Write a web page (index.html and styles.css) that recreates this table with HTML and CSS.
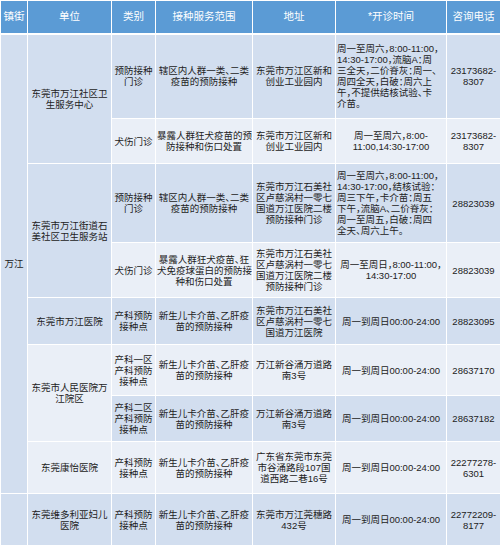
FILE: index.html
```html
<!DOCTYPE html>
<html lang="zh-CN">
<head>
<meta charset="utf-8">
<title>万江预防接种门诊</title>
<link rel="stylesheet" href="styles.css">
</head>
<body>
<table class="sched">
  <colgroup>
    <col class="c-town">
    <col class="c-unit">
    <col class="c-type">
    <col class="c-scope">
    <col class="c-addr">
    <col class="c-time">
    <col class="c-tel">
  </colgroup>
  <thead>
    <tr class="head">
      <th>镇街</th>
      <th>单位</th>
      <th>类别</th>
      <th>接种服务范围</th>
      <th>地址</th>
      <th>*开诊时间</th>
      <th>咨询电话</th>
    </tr>
  </thead>
  <tbody>
    <tr class="dark h85">
      <td rowspan="8">万江</td>
      <td rowspan="2">东莞市万江社区卫<br>生服务中心</td>
      <td>预防接种<br>门诊</td>
      <td>辖区内人群一类、二类<br>疫苗的预防接种</td>
      <td>东莞市万江区新和<br>创业工业园内</td>
      <td class="left">周一至周六，8:00-11:00，<br>14:30-17:00，流脑A：周<br>三全天，二价脊灰：周一、<br>周四全天，白破：周六上<br>午，不提供结核试验、卡<br>介苗。</td>
      <td>23173682-<br>8307</td>
    </tr>
    <tr class="light h45">
      <td>犬伤门诊</td>
      <td>暴露人群狂犬疫苗的预<br>防接种和伤口处置</td>
      <td>东莞市万江区新和<br>创业工业园内</td>
      <td>周一至周六，8:00-<br>11:00,14:30-17:00</td>
      <td>23173682-<br>8307</td>
    </tr>
    <tr class="dark h79">
      <td rowspan="2">东莞市万江街道石<br>美社区卫生服务站</td>
      <td>预防接种<br>门诊</td>
      <td>辖区内人群一类、二类<br>疫苗的预防接种</td>
      <td>东莞市万江石美社<br>区卢慈涡村一零七<br>国道万江医院二楼<br>预防接种门诊</td>
      <td class="left">周一至周六，8:00-11:00，<br>14:30-17:00，结核试验：<br>周三下午，卡介苗：周五<br>下午，流脑A、二价脊灰：<br>周一至周五，白破：周四<br>全天、周六上午。</td>
      <td>28823039</td>
    </tr>
    <tr class="light h55">
      <td>犬伤门诊</td>
      <td>暴露人群狂犬疫苗、狂<br>犬免疫球蛋白的预防接<br>种和伤口处置</td>
      <td>东莞市万江石美社<br>区卢慈涡村一零七<br>国道万江医院二楼<br>预防接种门诊</td>
      <td>周一至周日，8:00-11:00，<br>14:30-17:00</td>
      <td>28823039</td>
    </tr>
    <tr class="dark h47">
      <td>东莞市万江医院</td>
      <td>产科预防<br>接种点</td>
      <td>新生儿卡介苗、乙肝疫<br>苗的预防接种</td>
      <td>东莞市万江石美社<br>区卢慈涡村一零七<br>国道万江医院</td>
      <td>周一到周日00:00-24:00</td>
      <td>28823095</td>
    </tr>
    <tr class="light h51">
      <td rowspan="2">东莞市人民医院万<br>江院区</td>
      <td>产科一区<br>产科预防<br>接种点</td>
      <td>新生儿卡介苗、乙肝疫<br>苗的预防接种</td>
      <td>万江新谷涌万道路<br>南3号</td>
      <td>周一到周日00:00-24:00</td>
      <td>28637170</td>
    </tr>
    <tr class="dark h46">
      <td>产科二区<br>产科预防<br>接种点</td>
      <td>新生儿卡介苗、乙肝疫<br>苗的预防接种</td>
      <td>万江新谷涌万道路<br>南3号</td>
      <td>周一到周日00:00-24:00</td>
      <td>28637182</td>
    </tr>
    <tr class="light h52">
      <td>东莞康怡医院</td>
      <td>产科预防<br>接种点</td>
      <td>新生儿卡介苗、乙肝疫<br>苗的预防接种</td>
      <td>广东省东莞市东莞<br>市谷涌路段107国<br>道西路二巷16号</td>
      <td>周一到周日00:00-24:00</td>
      <td>22277278-<br>6301</td>
    </tr>
    <tr class="dark h52">
      <td></td>
      <td>东莞维多利亚妇儿<br>医院</td>
      <td>产科预防<br>接种点</td>
      <td>新生儿卡介苗、乙肝疫<br>苗的预防接种</td>
      <td>东莞市万江莞穗路<br>432号</td>
      <td>周一到周日00:00-24:00</td>
      <td>22772209-<br>8177</td>
    </tr>
  </tbody>
</table>
</body>
</html>
```
FILE: styles.css
```css
html, body {
  margin: 0;
  padding: 0;
  background: #ffffff;
}

.sched {
  width: 500px;
  table-layout: fixed;
  border-collapse: collapse;
  font-family: "Liberation Sans", "Noto Sans CJK SC", sans-serif;
  font-size: 9.5px;
  line-height: 11px;
  font-feature-settings: "halt";
  color: #222222;
}

.c-town { width: 27px; }
.c-unit { width: 84px; }
.c-type { width: 44px; }
.c-scope { width: 97px; }
.c-addr { width: 83px; }
.c-time { width: 111px; }
.c-tel { width: 54px; }

.sched th,
.sched td {
  border: 1px solid #ffffff;
  padding: 0 1px;
  text-align: center;
  vertical-align: middle;
  white-space: nowrap;
  overflow: hidden;
}

.head {
  height: 33px;
}

.head th {
  background: #5b9bd5;
  color: #ffffff;
  font-weight: normal;
  font-size: 10.5px;
  border-bottom: 2px solid #ffffff;
}

.dark td { background: #d2deef; }
.light td { background: #eaeff7; }

.sched td.left {
  text-align: left;
}

.h85 { height: 85px; }
.h45 { height: 45px; }
.h79 { height: 79px; }
.h55 { height: 55px; }
.h47 { height: 47px; }
.h51 { height: 51px; }
.h46 { height: 46px; }
.h52 { height: 52px; }
```
